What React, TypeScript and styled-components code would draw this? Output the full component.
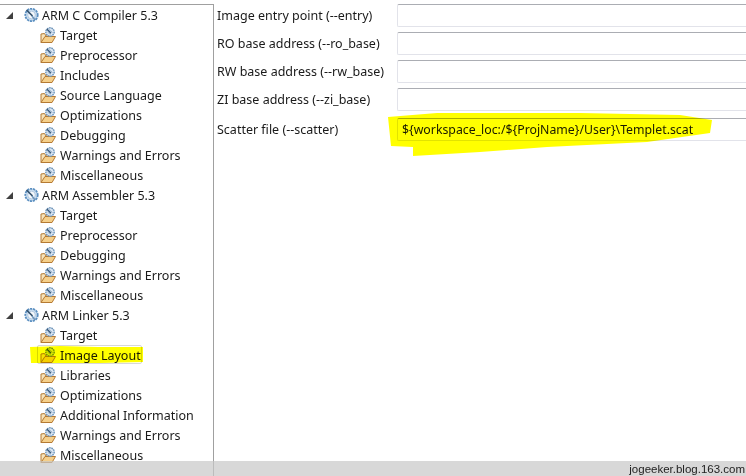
import React from "react"
import styled, { createGlobalStyle } from "styled-components"

const GlobalStyle = createGlobalStyle`
	html, body {
		margin: 0;
		padding: 0;
		background: #ffffff;
	}
`

const PageElement = styled.div`
	position: relative;
	width: 746px;
	height: 476px;
	display: flex;
	flex-direction: row;
	overflow: hidden;
	background: #ffffff;
	color: #1a1a1a;
	font-family: "Noto Sans", sans-serif;
	font-size: 12.5px;
`

const TreeElement = styled.div`
	width: 214px;
	flex-shrink: 0;
	box-sizing: border-box;
	margin-top: 4px;
	display: flex;
	flex-direction: column;
	border-top: 1px solid #a0a0a0;
	border-right: 1px solid #a0a0a0;
`

const TreeRowElement = styled.div<{ $depth: number }>`
	position: relative;
	height: 20px;
	flex-shrink: 0;
	display: flex;
	flex-direction: row;
	align-items: center;
	padding-left: ${props => props.$depth === 0 ? 6 : 40}px;
	white-space: nowrap;
`

const ExpanderElement = styled.div`
	width: 0;
	height: 0;
	margin-right: 9px;
	border-style: solid;
	border-width: 0 0 7px 7px;
	border-color: transparent transparent #404040 transparent;
`

const TreeIconElement = styled.svg`
	width: 18px;
	height: 18px;
	flex-shrink: 0;
	margin-right: 2px;
`

const SelectionElement = styled.div`
	position: absolute;
	left: 37px;
	top: 0;
	width: 105px;
	height: 19px;
	border: 1px solid #d8d8d8;
	border-radius: 2px;
	box-sizing: border-box;
`

const HighlightElement = styled.svg`
	position: absolute;
	left: 0;
	top: 0;
	mix-blend-mode: multiply;
	pointer-events: none;
`

const FormElement = styled.div`
	flex-grow: 1;
	box-sizing: border-box;
	padding-top: 4px;
	padding-left: 3px;
	display: flex;
	flex-direction: column;
`

const FormRowElement = styled.div<{ $gap: number }>`
	height: 23px;
	margin-bottom: ${props => props.$gap}px;
	display: flex;
	flex-direction: row;
	align-items: center;
`

const FormLabelElement = styled.span`
	width: 180px;
	flex-shrink: 0;
	white-space: nowrap;
`

const FormInputElement = styled.div`
	flex-grow: 1;
	height: 23px;
	box-sizing: border-box;
	padding-left: 4px;
	display: flex;
	align-items: center;
	white-space: nowrap;
	font-size: 12.3px;
	border: 1px solid #e2e3ea;
	border-top-color: #abadb3;
	border-right: none;
	border-radius: 2px 0 0 2px;
	background: transparent;
`

const WatermarkElement = styled.div`
	position: absolute;
	left: 0;
	right: 0;
	bottom: 0;
	height: 15px;
	padding-right: 1px;
	display: flex;
	align-items: center;
	justify-content: flex-end;
	background: rgba(200, 200, 200, 0.7);
	color: #222222;
	font-family: "Liberation Sans", sans-serif;
	font-size: 11.5px;
`

function RootIcon() {
	return (
		<TreeIconElement viewBox="0 0 18 18">
			<circle cx="9.5" cy="9" r="6.2" fill="#c9ddf0" stroke="#5b8fc0" strokeWidth="1.8" strokeDasharray="2.2 0.8" />
			<circle cx="9.5" cy="9" r="3.8" fill="#f6f9fc" stroke="#a9c2da" strokeWidth="0.8" />
			<path d="M4.5 4 L10.5 10" stroke="#35536f" strokeWidth="1.7" />
			<path d="M10 10 L13 14" stroke="#6d93b8" strokeWidth="1.4" />
		</TreeIconElement>
	)
}

function ItemIcon() {
	return (
		<TreeIconElement viewBox="0 0 18 18">
			<path d="M1 8 L4.5 7.5 L6 10 L9 10 L9 12 L1 16.5 Z" fill="#f6e3bb" stroke="#b57a32" strokeWidth="1" strokeLinejoin="round" />
			<path d="M1 16.5 L5 10.5 L15.5 10.5 L12 16.5 Z" fill="#f5cf8a" stroke="#b57a32" strokeWidth="1" strokeLinejoin="round" />
			<circle cx="10" cy="6" r="4.2" fill="#dbe6f2" stroke="#6b93b9" strokeWidth="1.4" strokeDasharray="1.6 0.7" />
			<path d="M6.8 3 L11 7.2" stroke="#3a5a7a" strokeWidth="1.5" />
			<path d="M9 3.5 L12.5 6.5 M7.5 6 L10.5 8.5" stroke="#8aa7c4" strokeWidth="0.8" />
		</TreeIconElement>
	)
}

const treeRows: { name: string, depth: number, selected?: boolean }[] = [
	{ name: "ARM C Compiler 5.3", depth: 0 },
	{ name: "Target", depth: 1 },
	{ name: "Preprocessor", depth: 1 },
	{ name: "Includes", depth: 1 },
	{ name: "Source Language", depth: 1 },
	{ name: "Optimizations", depth: 1 },
	{ name: "Debugging", depth: 1 },
	{ name: "Warnings and Errors", depth: 1 },
	{ name: "Miscellaneous", depth: 1 },
	{ name: "ARM Assembler 5.3", depth: 0 },
	{ name: "Target", depth: 1 },
	{ name: "Preprocessor", depth: 1 },
	{ name: "Debugging", depth: 1 },
	{ name: "Warnings and Errors", depth: 1 },
	{ name: "Miscellaneous", depth: 1 },
	{ name: "ARM Linker 5.3", depth: 0 },
	{ name: "Target", depth: 1 },
	{ name: "Image Layout", depth: 1, selected: true },
	{ name: "Libraries", depth: 1 },
	{ name: "Optimizations", depth: 1 },
	{ name: "Additional Information", depth: 1 },
	{ name: "Warnings and Errors", depth: 1 },
	{ name: "Miscellaneous", depth: 1 },
]

const formRows: { label: string, value?: string, gap: number }[] = [
	{ label: "Image entry point (--entry)", gap: 5 },
	{ label: "RO base address (--ro_base)", gap: 5 },
	{ label: "RW base address (--rw_base)", gap: 5 },
	{ label: "ZI base address (--zi_base)", gap: 7 },
	{ label: "Scatter file (--scatter)", value: "${workspace_loc:/${ProjName}/User}\\Templet.scat", gap: 0 },
]

export default function App() {
	return (
		<PageElement>
			<GlobalStyle />
			<TreeElement>
				{treeRows.map((row, index) => (
					<TreeRowElement key={index} $depth={row.depth}>
						{row.selected ? <SelectionElement /> : null}
						{row.depth === 0 ? <ExpanderElement /> : null}
						{row.depth === 0 ? <RootIcon /> : <ItemIcon />}
						{row.name}
					</TreeRowElement>
				))}
			</TreeElement>
			<FormElement>
				{formRows.map(row => (
					<FormRowElement key={row.label} $gap={row.gap}>
						<FormLabelElement>{row.label}</FormLabelElement>
						<FormInputElement>{row.value}</FormInputElement>
					</FormRowElement>
				))}
			</FormElement>
			<HighlightElement width="746" height="476" viewBox="0 0 746 476">
				<path d="M30 347 L60 346 L98 347 L143 347 L143 362 L100 363 L31 363 Z" fill="#ffff00" />
				<path d="M388 117 L437 113 L580 113 L680 115 L712 120 L710 133 L647 142 L547 147 L480 152 L413 156 L413 147 L391 146 Z" fill="#ffff00" />
			</HighlightElement>
			<WatermarkElement>jogeeker.blog.163.com</WatermarkElement>
		</PageElement>
	)
}
